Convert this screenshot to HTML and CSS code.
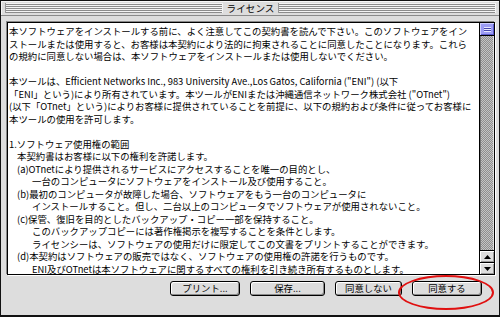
FILE: index.html
```html
<!DOCTYPE html>
<html lang="ja">
<head>
<meta charset="utf-8">
<title>ライセンス</title>
<link rel="stylesheet" href="styles.css">
</head>
<body>
<div class="window">
  <div class="titlebar">
    <span class="stripes"></span>
    <span class="title">ライセンス</span>
    <span class="stripes"></span>
  </div>
  <div class="body">
    <div class="textbox">
      <div class="text">
        <div class="line">本ソフトウェアをインストールする前に、よく注意してこの契約書を読んで下さい。このソフトウェアをイン</div>
        <div class="line">ストールまたは使用すると、お客様は本契約により法的に拘束されることに同意したことになります。これら</div>
        <div class="line">の規約に同意しない場合は、本ソフトウェアをインストールまたは使用しないでください。</div>
        <div class="line blank"></div>
        <div class="line">本ツールは、Efficient Networks Inc., 983 University Ave.,Los Gatos, California ("ENI") (以下</div>
        <div class="line">「ENI」という)により所有されています。本ツールがENIまたは沖縄通信ネットワーク株式会社 ("OTnet")</div>
        <div class="line">(以下「OTnet」という)によりお客様に提供されていることを前提に、以下の規約および条件に従ってお客様に</div>
        <div class="line">本ツールの使用を許可します。</div>
        <div class="line blank"></div>
        <div class="line">1.ソフトウェア使用権の範囲</div>
        <div class="line in1">本契約書はお客様に以下の権利を許諾します。</div>
        <div class="line in1">(a)OTnetにより提供されるサービスにアクセスすることを唯一の目的とし、</div>
        <div class="line in2">一台のコンピュータにソフトウェアをインストール及び使用すること。</div>
        <div class="line in1">(b)最初のコンピュータが故障した場合、ソフトウェアをもう一台のコンピュータに</div>
        <div class="line in2">インストールすること。但し、二台以上のコンピュータでソフトウェアが使用されないこと。</div>
        <div class="line in1">(c)保管、復旧を目的としたバックアップ・コピー一部を保持すること。</div>
        <div class="line in2">このバックアップコピーには著作権掲示を複写することを条件とします。</div>
        <div class="line in2">ライセンシーは、ソフトウェアの使用だけに限定してこの文書をプリントすることができます。</div>
        <div class="line in1">(d)本契約はソフトウェアの販売ではなく、ソフトウェアの使用権の許諾を行うものです。</div>
        <div class="line in2">ENI及びOTnetは本ソフトウェアに関するすべての権利を引き続き所有するものとします。</div>
      </div>
      <div class="scrollbar">
        <div class="thumb"><span class="grip"></span></div>
        <div class="track"></div>
        <div class="arrow">
          <svg width="7" height="4" viewBox="0 0 7 4"><path d="M3.5 0 L7 4 L0 4 Z" fill="#000"/></svg>
        </div>
        <div class="arrow">
          <svg width="7" height="4" viewBox="0 0 7 4"><path d="M0 0 L7 0 L3.5 4 Z" fill="#000"/></svg>
        </div>
      </div>
    </div>
    <div class="buttons">
      <div class="btn w70">プリント...</div>
      <div class="btn w75">保存...</div>
      <div class="btn w67">同意しない</div>
      <div class="btn w70 agree">同意する<span class="circle"></span></div>
    </div>
  </div>
</div>
</body>
</html>
```
FILE: styles.css
```css
* { box-sizing: border-box; }
html, body { margin: 0; padding: 0; }
body {
  width: 500px;
  height: 317px;
  background: #ffffff;
  font-family: "Noto Sans CJK JP", "Liberation Sans", sans-serif;
  overflow: hidden;
}
.window {
  width: 500px;
  height: 317px;
  background: #dddddd;
  border: 1px solid #111;
  border-bottom-width: 2px;
  display: flex;
  flex-direction: column;
}
.titlebar {
  height: 15px;
  display: flex;
  align-items: center;
  gap: 3px;
  padding: 0 3px 0 4px;
  border-bottom: 1px solid #8a8a8a;
  background: #dddddd;
  box-shadow: inset 1px 1px 0 #f5f5f5;
}
.stripes {
  flex: 1;
  height: 10px;
  background: repeating-linear-gradient(to bottom, #f4f4f4 0 1px, #8c8c8c 1px 2px);
  border-left: 1px solid #999;
  border-right: 1px solid #f4f4f4;
}
.title {
  font-size: 9.6px;
  line-height: 14px;
  color: #000;
  padding: 0 1px;
}
.body {
  flex: 1;
  padding: 6px 4px 0 6px;
  display: flex;
  flex-direction: column;
}
.textbox {
  height: 253px;
  background: #fff;
  border: 1px solid #000;
  display: flex;
  box-shadow: -1px -1px 0 #888, 1px 1px 0 #fff;
}
.text {
  flex: 1;
  padding: 2px 0 0 1px;
  font-size: 9.4px;
  line-height: 12.5px;
  color: #000;
  overflow: hidden;
}
.line { white-space: nowrap; height: 12.5px; }
.in1 { padding-left: 8px; }
.in2 { padding-left: 23px; }
.scrollbar {
  width: 15px;
  border-left: 1px solid #000;
  display: flex;
  flex-direction: column;
}
.thumb {
  height: 13px;
  background: #9c9cf4;
  border-bottom: 1px solid #000;
  box-shadow: inset 1px 1px 0 #d0d0ff, inset -1px -1px 0 #5a5acc;
  display: flex;
  align-items: center;
  justify-content: center;
}
.grip {
  width: 7px;
  height: 5px;
  background: repeating-linear-gradient(to bottom, #e8e8ff 0 1px, #4646aa 1px 2px);
}
.track {
  flex: 1;
  background-color: #aaa;
  background-image: conic-gradient(#8e8e8e 25%, #c4c4c4 0 50%, #8e8e8e 0 75%, #c4c4c4 0);
  background-size: 2px 2px;
  box-shadow: inset 1px 0 0 #777, inset -1px 0 0 #e0e0e0;
}
.arrow {
  height: 12px;
  background: #dddddd;
  border-top: 1px solid #000;
  box-shadow: inset 1px 1px 0 #fff, inset -1px -1px 0 #999;
  display: flex;
  align-items: center;
  justify-content: center;
}
.arrow svg { display: block; }
.buttons {
  display: flex;
  justify-content: flex-end;
  gap: 10px;
  padding: 6px 13px 0 0;
}
.btn {
  position: relative;
  height: 15px;
  border: 1px solid #000;
  border-radius: 3px;
  background: #dddddd;
  box-shadow: inset 1px 1px 0 #fff, inset -1px -1px 0 #8a8a8a;
  font-size: 9.4px;
  line-height: 13px;
  text-align: center;
  color: #000;
}
.w70 { width: 70px; }
.w75 { width: 75px; }
.w67 { width: 67px; }
.circle {
  position: absolute;
  left: -15px;
  top: -7px;
  width: 96px;
  height: 35px;
  border: 2px solid #e01010;
  border-radius: 50%;
}
```
